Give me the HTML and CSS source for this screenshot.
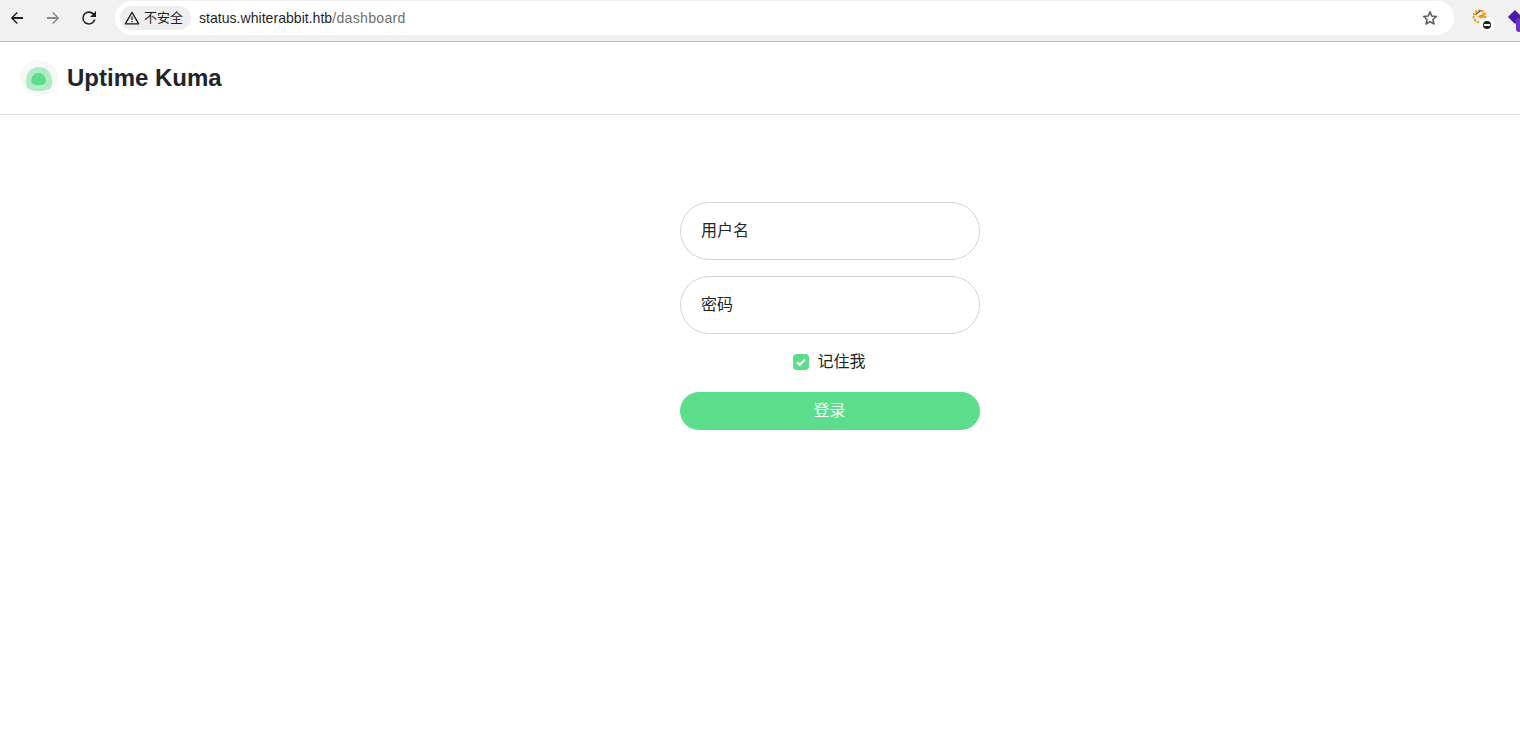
FILE: index.html
```html
<!DOCTYPE html>
<html lang="zh-CN">
<head>
    <meta charset="UTF-8">
    <title>Uptime Kuma</title>
    <link rel="stylesheet" href="styles.css">
</head>
<body>

<div class="browser-bar">
    <div class="nav-buttons">
        <svg class="nav-icon" viewBox="0 0 16 16"><path d="M14 7H4.800l4-4L7.800 2 1.800 8l6 6 1-1-4-4H14z" fill="#1f1f1f"/></svg>
        <svg class="nav-icon" viewBox="0 0 16 16"><path d="M2 7h9.200l-4-4 1-1 6 6-6 6-1-1 4-4H2z" fill="#8a8a8a"/></svg>
        <svg class="nav-icon" viewBox="0 0 16 16"><path d="M8 1.300a6.700 6.700 0 1 0 6.500 8.300h-1.700A5.100 5.100 0 1 1 8 2.900c1.400 0 2.700.6 3.600 1.500L9 7h6V1l-2.300 2.300A6.600 6.600 0 0 0 8 1.300z" fill="#1f1f1f"/></svg>
    </div>
    <div class="url-pill">
        <div class="security-chip">
            <svg class="warn-icon" viewBox="0 0 16 16"><path d="M8 2.400 1.300 13.800h13.400z" fill="none" stroke="#1f1f1f" stroke-width="1.300" stroke-linejoin="round"/><path d="M7.400 6.500h1.200v3.800H7.400zM7.400 11h1.200v1.200H7.400z" fill="#1f1f1f"/></svg>
            <span class="chip-text">不安全</span>
        </div>
        <div class="url-text">status.whiterabbit.htb<span class="url-path">/dashboard</span></div>
        <svg class="star-icon" viewBox="0 0 16 16"><path d="M8 1.800l1.800 4.300 4.600.4-3.500 3 1.100 4.500L8 11.600 4 14l1.100-4.500-3.500-3 4.600-.4z" fill="none" stroke="#5a5a5a" stroke-width="1.500" stroke-linejoin="round"/></svg>
    </div>
    <div class="extensions">
        <div class="ext-one">
            <svg class="ext-one-art" viewBox="0 0 16 16"><circle cx="7" cy="7" r="5.500" fill="none" stroke="#f0960f" stroke-width="2" stroke-dasharray="2 1"/><path d="M5 7l6-3 1 3-3 2z" fill="#f0960f"/><path d="M3 5l5-4 .6.600-5 4z" fill="#333"/></svg>
            <div class="ext-badge"><span class="ext-badge-dot"></span></div>
        </div>
        <div class="ext-two">
            <span class="ext-two-diamond"></span>
            <span class="ext-two-square"></span>
        </div>
    </div>
</div>

<header class="site-header">
    <svg class="logo" viewBox="0 0 38 36">
        <path d="M19 0C29 0 38 7 38 18 38 29 30 36 19 36 8 36 0 29 0 18 0 7 9 0 19 0z" fill="#f7f8f7"/>
        <path d="M19 7C26 7 30 11 31.500 17 33 23 32 27 29 29 26 30.700 22 31 19 31 16 31 12 30.700 9 29 6 27 5 23 6.500 17 8 11 12 7 19 7z" fill="#aeecc5"/>
        <path d="M18.500 13C22 13 24.500 15 25.500 18.500 26.300 21.500 25.500 23.800 23.500 24.500 21.500 25 20 25 18.500 25 17 25 15.500 25 13.500 24.500 11.500 23.800 10.700 21.500 11.500 18.500 12.500 15 15 13 18.500 13z" fill="#5cdd8b"/>
    </svg>
    <span class="site-title">Uptime Kuma</span>
</header>

<main class="login-page">
    <form class="login-form">
        <div class="field"><span class="cjk-label">用户名</span></div>
        <div class="field"><span class="cjk-label">密码</span></div>
        <div class="remember">
            <span class="check-box">
                <svg viewBox="0 0 16 16"><path d="M4 8.300l2.700 2.600L12 5.500" fill="none" stroke="#fff" stroke-width="2.200"/></svg>
            </span>
            <span class="cjk-label">记住我</span>
        </div>
        <button type="button" class="login-btn"><span class="cjk-label">登录</span></button>
    </form>
</main>

</body>
</html>
```

FILE: styles.css
```css
body {
    margin: 0;
    height: 729px;
    overflow: hidden;
    background-color: #ffffff;
    font-family: "Liberation Sans", "Noto Sans CJK SC", sans-serif;
    color: #212529;
}
.browser-bar {
    display: flex;
    align-items: flex-start;
    height: 41px;
    background-color: #f1f1f1;
    border-bottom: 1px solid #bdbdbd;
    overflow: hidden;
}
.nav-buttons {
    display: flex;
    flex-shrink: 0;
    gap: 20px;
    padding: 10px 0 0 9px;
    width: 106px;
}
.nav-icon {
    width: 16px;
    height: 16px;
}
.url-pill {
    display: flex;
    flex-shrink: 0;
    align-items: center;
    width: 1339px;
    height: 34px;
    margin-top: 1px;
    border-radius: 17px;
    background-color: #ffffff;
}
.security-chip {
    display: flex;
    align-items: center;
    gap: 4px;
    height: 24px;
    margin-left: 5px;
    padding: 0 8px 0 4px;
    border-radius: 12px;
    background-color: #eeeeee;
    font-size: 13px;
    color: #1f1f1f;
}
.chip-text {
    padding-bottom: 3px;
}
.warn-icon {
    width: 16px;
    height: 16px;
}
.url-text {
    flex: 1;
    margin-left: 8px;
    font-size: 14.100px;
    color: #1f1f1f;
}
.url-path {
    color: #6f6f6f;
    letter-spacing: 0.300px;
}
.star-icon {
    width: 16px;
    height: 16px;
    margin-right: 16px;
}
.extensions {
    display: flex;
    flex-shrink: 0;
    gap: 19px;
    padding: 9px 0 0 18px;
}
.ext-one {
    position: relative;
    width: 17px;
    height: 17px;
}
.ext-one-art {
    width: 17px;
    height: 17px;
}
.ext-badge {
    position: absolute;
    left: 8px;
    top: 9px;
    width: 14px;
    height: 13px;
    border-radius: 3px;
    background-color: #ffffff;
    display: flex;
    align-items: center;
    justify-content: center;
}
.ext-badge-dot {
    display: flex;
    align-items: center;
    justify-content: center;
    width: 8px;
    height: 8px;
    border-radius: 50%;
    background-color: #222222;
}
.ext-badge-dot::after {
    content: "";
    width: 6px;
    height: 2px;
    background-color: #ffffff;
}
.ext-two {
    position: relative;
    width: 16px;
    height: 20px;
}
.ext-two-diamond {
    position: absolute;
    left: 2px;
    top: 3px;
    width: 10px;
    height: 10px;
    background-color: #4a1aa8;
    transform: rotate(45deg);
}
.ext-two-square {
    position: absolute;
    left: 8px;
    top: 9px;
    width: 12px;
    height: 14px;
    border-radius: 3px;
    background-color: #6a35c9;
}
.site-header {
    display: flex;
    align-items: center;
    gap: 9px;
    height: 72px;
    padding-left: 20px;
    border-bottom: 1px solid #dee2e6;
}
.logo {
    width: 38px;
    height: 36px;
}
.site-title {
    font-size: 24px;
    font-weight: 700;
    color: #212529;
}
.login-page {
    padding: 87px 0 0 680px;
}
.login-form {
    display: flex;
    flex-direction: column;
    width: 300px;
}
.cjk-label {
    padding-bottom: 4px;
}
.field {
    display: flex;
    align-items: center;
    box-sizing: border-box;
    height: 58px;
    margin-bottom: 16px;
    padding-left: 20px;
    border: 1px solid #ced4da;
    border-radius: 29px;
    font-size: 16px;
    color: #212529;
}
.remember {
    display: flex;
    align-items: center;
    justify-content: center;
    gap: 8px;
    height: 24px;
    margin-bottom: 18px;
    padding-right: 1px;
    font-size: 16px;
}
.check-box {
    display: flex;
    width: 16px;
    height: 16px;
    border-radius: 4px;
    background-color: #5cdd8b;
}
.login-btn {
    height: 38px;
    padding: 0 1px 0 0;
    border: none;
    border-radius: 19px;
    background-color: #5cdd8b;
    color: #ffffff;
    font-family: inherit;
    font-size: 16px;
}
.login-btn .cjk-label {
    display: inline-block;
}
```
